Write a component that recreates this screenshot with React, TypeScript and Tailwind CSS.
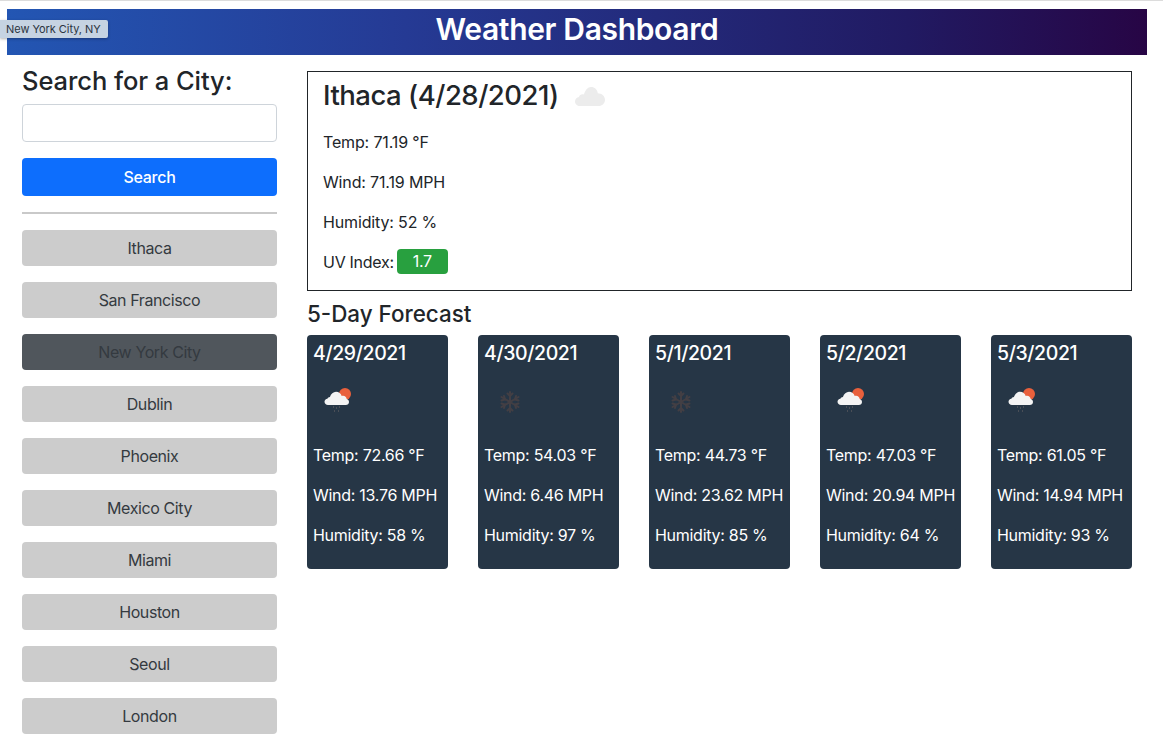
const cities = ['Ithaca', 'San Francisco', 'New York City', 'Dublin', 'Phoenix', 'Mexico City', 'Miami', 'Houston', 'Seoul', 'London'];

const forecast = [
  { date: '4/29/2021', icon: 'rain', temp: '72.66', wind: '13.76', humidity: '58' },
  { date: '4/30/2021', icon: 'snow', temp: '54.03', wind: '6.46', humidity: '97' },
  { date: '5/1/2021', icon: 'snow', temp: '44.73', wind: '23.62', humidity: '85' },
  { date: '5/2/2021', icon: 'rain', temp: '47.03', wind: '20.94', humidity: '64' },
  { date: '5/3/2021', icon: 'rain', temp: '61.05', wind: '14.94', humidity: '93' },
];

function CloudIcon() {
  return (
    <svg width="30" height="19" viewBox="0 0 30 19" className="block">
      <path d="M5 19c-2.800 0-5-2-5-4.600 0-2.300 1.700-4.100 4-4.500.4-1.500 1.800-2.600 3.500-2.600.5 0 1 .1 1.400.3C10.300 3 12.800 0 16 0c3.600 0 6.500 2.700 6.800 6.200C26.700 6.300 30 9 30 12.700 30 16.200 27.200 19 23.500 19H5z" fill="#ececec" />
    </svg>
  );
}

function RainSunIcon() {
  return (
    <svg width="28" height="27" viewBox="0 0 28 27" className="block">
      <circle cx="21" cy="7" r="6" fill="#e9603c" />
      <path d="M4 18c-2 0-3.500-1.400-3.500-3.200 0-1.600 1.200-2.900 2.900-3.100.4-1 1.300-1.700 2.500-1.800C7 7 9.300 4.800 12 4.800c2.800 0 5 1.800 5.700 4.300.4-.2.900-.3 1.300-.3 2 0 3.500 1.400 3.700 3.200 1.400.3 2.300 1.500 2.300 2.900 0 1.800-1.400 3.100-3.200 3.100H4z" fill="#f4f4f4" />
      <g fill="#4a4f57">
        <rect x="9" y="19" width="1" height="2" />
        <rect x="12" y="20" width="1" height="2" />
        <rect x="15" y="19" width="1" height="2" />
        <rect x="10" y="23" width="1" height="2" />
        <rect x="14" y="23" width="1" height="2" />
      </g>
    </svg>
  );
}

function SnowIcon() {
  return (
    <svg width="20" height="22" viewBox="0 0 20 22" className="block" stroke="#433f44" strokeWidth="2" fill="none" strokeLinecap="round">
      <path d="M10 1v20M1.500 6l17 10M18.500 6l-17 10" />
      <path d="M7.500 2.500 10 5l2.500-2.500M7.500 19.500 10 17l2.500 2.500M1.500 9.500 5 8.500 4 5M16 5l-1 3.500 3.500 1M1.500 12.500 5 13.500 4 17M16 17l-1-3.500 3.500-1" />
    </svg>
  );
}

export default function App() {
  return (
    <div className="h-[746px] overflow-hidden bg-white text-[#212529] font-['Inter','Liberation_Sans',sans-serif] text-[16px] leading-6 tracking-[-0.28px]">
      <div className="h-px bg-[#dcdcdc]" />
      <header className="relative mt-2 ml-[7px] w-[1140px] h-[46px] bg-[linear-gradient(to_right,#2356b3,#253a94_35%,#211a62_79%,#270545)] text-center text-[30px] font-semibold leading-[40px] tracking-[-0.35px] text-white">
        Weather Dashboard
        <div className="absolute left-[-7px] top-[11px] h-[18px] pl-[6px] pr-[7px] bg-[#c6d3e2] rounded-r-[2px] shadow-[0_1px_3px_rgba(0,0,0,0.3)] text-[11px] font-normal leading-[18px] tracking-[-0.05px] text-[#2b3440] whitespace-nowrap">
          New York City, NY
        </div>
      </header>

      <div className="flex">
        <aside className="ml-[22px] w-[255px] shrink-0">
          <h2 className="mt-[9px] text-[25.500px] font-medium leading-[34px] tracking-[-0.06px]">Search for a City:</h2>
          <input className="mt-[6px] block w-full h-[38px] bg-white border border-[#ced4da] rounded" />
          <button className="mt-4 block w-full h-[38px] bg-[#0d6efd] rounded text-white font-medium">Search</button>
          <hr className="mt-4 mb-4 h-0.5 border-0 bg-[#c9c9c9]" />
          <div className="flex flex-col gap-4 tracking-[-0.4px]">
            {cities.map((city) => (
              <button
                key={city}
                className={`block w-full h-9 rounded ${city === 'New York City' ? 'bg-[#50565c] text-[#343a40]' : 'bg-[#cccccc] text-[#343a40]'}`}
              >
                {city}
              </button>
            ))}
          </div>
        </aside>

        <main className="ml-[30px] w-[825px] shrink-0">
          <section className="mt-4 h-[220px] border border-[#212529] pl-[15px]">
            <div className="flex items-center h-[46px]">
              <h2 className="text-[27.500px] font-medium leading-[46px] tracking-[-0.5px]">Ithaca (4/28/2021)</h2>
              <div className="ml-4 mt-[3px]"><CloudIcon /></div>
            </div>
            <p className="mt-3 tracking-[-0.15px]">Temp: 71.19 °F</p>
            <p className="mt-4 tracking-[-0.15px]">Wind: 71.19 MPH</p>
            <p className="mt-4 tracking-[-0.15px]">Humidity: 52 %</p>
            <div className="mt-[15px] flex items-center">
              UV Index:
              <span className="ml-[3px] w-[51px] h-[25px] bg-[#28a03f] rounded text-center text-white leading-[25px]">1.7</span>
            </div>
          </section>

          <h3 className="mt-2 text-[22.400px] font-medium leading-[30px] tracking-normal">5-Day Forecast</h3>

          <div className="mt-[6px] flex justify-between">
            {forecast.map((day) => (
              <div key={day.date} className="w-[141px] h-[234px] bg-[#263646] rounded text-white pl-[6px] whitespace-nowrap">
                <h4 className="pt-[6px] text-[19.500px] font-medium leading-6 tracking-[-0.4px]">{day.date}</h4>
                <div className="h-[62px] flex items-center">
                  {day.icon === 'rain' ? (
                    <div className="ml-[11px] mt-[8px]"><RainSunIcon /></div>
                  ) : (
                    <div className="ml-[16px] mt-[11px]"><SnowIcon /></div>
                  )}
                </div>
                <p className="mt-4">Temp: {day.temp} °F</p>
                <p className="mt-4">Wind: {day.wind} MPH</p>
                <p className="mt-4">Humidity: {day.humidity} %</p>
              </div>
            ))}
          </div>
        </main>
      </div>
    </div>
  );
}
